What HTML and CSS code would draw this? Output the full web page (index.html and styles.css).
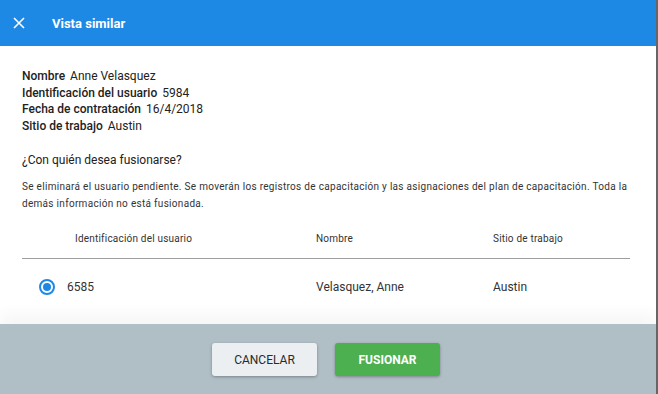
FILE: index.html
```html
<!DOCTYPE html>
<html lang="es">
<head>
  <meta charset="UTF-8" />
  <title>Vista similar</title>
  <link rel="stylesheet" href="styles.css">
</head>
<body>
  <div class="dialog">
    <!-- Header -->
    <header class="dialog-head">
      <svg class="close" width="12" height="12" viewBox="0 0 12 12">
        <path d="M1 1 L11 11 M11 1 L1 11" stroke="#fff" stroke-width="1.6" fill="none"/>
      </svg>
      <h1>Vista similar</h1>
    </header>

    <div class="dialog-body">
      <div class="info">
        <p><b>Nombre</b> Anne Velasquez</p>
        <p><b>Identificación del usuario</b> 5984</p>
        <p><b>Fecha de contratación</b> 16/4/2018</p>
        <p><b>Sitio de trabajo</b> Austin</p>
      </div>

      <p class="question">¿Con quién desea fusionarse?</p>
      <p class="note">Se eliminará el usuario pendiente. Se moverán los registros de capacitación y las asignaciones del plan de capacitación. Toda la demás información no está fusionada.</p>

      <div class="table">
        <div class="row head">
          <div class="cell first">Identificación del usuario</div>
          <div class="cell">Nombre</div>
          <div class="cell">Sitio de trabajo</div>
        </div>
        <div class="row">
          <div class="cell first"><span class="radio"></span>6585</div>
          <div class="cell">Velasquez, Anne</div>
          <div class="cell">Austin</div>
        </div>
      </div>
    </div>

    <!-- Footer -->
    <footer class="dialog-foot">
      <button class="btn cancel">CANCELAR</button>
      <button class="btn merge">FUSIONAR</button>
    </footer>
  </div>
</body>
</html>
```

FILE: styles.css
```css
/* === PAGE === */
body {
  margin: 0;
  font-family: Roboto, "Liberation Sans", sans-serif;
  color: #222;
  background: #fff;
}

.dialog {
  width: 656px;
  height: 394px;
  border-right: 2px solid #666;
  display: flex;
  flex-direction: column;
  overflow: hidden;
}

/* === HEADER === */
.dialog-head {
  height: 46px;
  background: #1e88e5;
  display: flex;
  align-items: center;
  padding-left: 13px;
  flex-shrink: 0;
}

.close {
  margin-right: 27px;
}

.dialog-head h1 {
  margin: 0;
  font-size: 13px;
  font-weight: bold;
  color: #fff;
}

/* === BODY === */
.dialog-body {
  flex: 1;
  padding: 22px 26px 0 22px;
}

.info p {
  margin: 0;
  font-size: 12px;
  line-height: 16.7px;
}

.info b {
  font-weight: 500;
  margin-right: 2px;
}

.question {
  margin: 17px 0 0;
  font-size: 12px;
  line-height: 17px;
}

.note {
  margin: 9px 0 0;
  font-size: 10px;
  letter-spacing: 0.3px;
  line-height: 17px;
  color: #333;
}

/* === TABLE === */
.table {
  margin-top: 8px;
}

.row {
  display: grid;
  grid-template-columns: 294px 177px 1fr;
  align-items: center;
  height: 56px;
  font-size: 12px;
  color: #333;
}

.row.head {
  height: 38px;
  font-size: 10px;
  letter-spacing: 0.2px;
  border-bottom: 1px solid #9e9e9e;
}

.row.head .first {
  padding-left: 53px;
}

.cell.first {
  display: flex;
  align-items: center;
  padding-left: 17px;
}

.radio {
  width: 12px;
  height: 12px;
  border: 2px solid #1e88e5;
  border-radius: 50%;
  margin-right: 12px;
  position: relative;
}

.radio::after {
  content: "";
  position: absolute;
  left: 2px;
  top: 2px;
  width: 8px;
  height: 8px;
  border-radius: 50%;
  background: #1e88e5;
}

/* === FOOTER === */
.dialog-foot {
  height: 70px;
  flex-shrink: 0;
  background: #b0bec5;
  display: flex;
  justify-content: center;
  align-items: flex-start;
  gap: 18px;
  padding-top: 19px;
  padding-right: 4px;
  box-sizing: border-box;
  box-shadow: 0 -10px 14px rgba(0, 0, 0, 0.04);
}

.btn {
  width: 105px;
  height: 33px;
  border: none;
  border-radius: 3px;
  font-family: Roboto, "Liberation Sans", sans-serif;
  font-size: 12px;
  box-shadow: 0 1px 3px rgba(0, 0, 0, 0.3);
}

.cancel {
  background: #eceff1;
  color: #2a2a2a;
}

.merge {
  background: #4caf50;
  color: #fff;
  font-weight: bold;
}
```
